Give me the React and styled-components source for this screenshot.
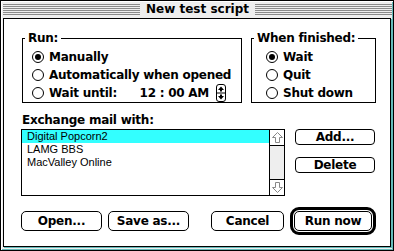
import React from "react";
import styled, { createGlobalStyle } from "styled-components";

const GlobalStyle = createGlobalStyle`
  html, body {
    margin: 0;
    padding: 0;
    background: #fff;
  }
  body {
    width: 394px;
    height: 251px;
    overflow: hidden;
  }
`;

const sys = `"DejaVu Sans", "Liberation Sans", sans-serif`;
const small = `"Liberation Sans", Arial, sans-serif`;

const Window = styled.div`
  box-sizing: border-box;
  width: 394px;
  height: 251px;
  border: 1px solid #000;
  background: #eeeeee;
  box-shadow: inset 1px 1px 0 #ffffff, inset -1px -1px 0 #66bbbb;
  display: flex;
  flex-direction: column;
  padding: 0 2px 3px 2px;
  font-family: ${sys};
  letter-spacing: -0.25px;
  color: #000;
`;

const TitleBar = styled.div`
  height: 17px;
  display: flex;
  align-items: center;
  margin: 0 -1px 0 0;
`;

const Stripes = styled.div`
  flex: 1;
  height: 11px;
  background: repeating-linear-gradient(
    to bottom,
    #8a8a8a 0,
    #8a8a8a 1px,
    transparent 1px,
    transparent 2px
  );
`;

const Title = styled.div`
  padding: 0 6px;
  font-size: 12px;
  font-weight: bold;
  line-height: 17px;
  letter-spacing: 0;
`;

const Content = styled.div`
  flex: 1;
  border: 1px solid #000;
  background: #fff;
  box-shadow: 1px 1px 0 #66bbbb;
  padding: 13px 0 0 17px;
  display: flex;
  flex-direction: column;
`;

const TopRow = styled.div`
  display: flex;
  gap: 9px;
  margin-left: 1px;
`;

const Group = styled.fieldset`
  box-sizing: border-box;
  width: ${(p) => p.$w}px;
  margin: 0;
  padding: 3px 0 0 0;
  border: 1px solid #000;
  min-inline-size: 0;
`;

const Legend = styled.legend`
  margin-left: 2px;
  padding: 0 3px;
  font-size: 12px;
  font-weight: bold;
  line-height: 13px;
`;

const RadioRow = styled.div`
  height: 18px;
  display: flex;
  align-items: center;
  padding-left: ${(p) => p.$indent}px;
  font-size: 12px;
  font-weight: bold;
`;

const Circle = styled.span`
  box-sizing: border-box;
  width: 12px;
  height: 12px;
  border: 1px solid #000;
  border-radius: 50%;
  display: flex;
  align-items: center;
  justify-content: center;
  margin-right: 5px;
  flex: none;

  &::after {
    content: "";
    width: 6px;
    height: 6px;
    border-radius: 50%;
    background: #000;
    display: ${(p) => (p.$on ? "block" : "none")};
  }
`;

const TimeText = styled.span`
  margin-left: auto;
  white-space: pre;
`;

const Spinner = styled.svg`
  margin: 0 15px 0 7px;
  flex: none;
`;

const MiddleRow = styled.div`
  display: flex;
  gap: 10px;
  margin-top: 10px;
`;

const ListColumn = styled.div`
  display: flex;
  flex-direction: column;
`;

const Label = styled.div`
  font-size: 12px;
  font-weight: bold;
  line-height: 14px;
  margin-left: 1px;
  margin-bottom: 2px;
`;

const ListBox = styled.div`
  box-sizing: border-box;
  width: 264px;
  height: 67px;
  border: 1px solid #000;
  display: flex;
`;

const Items = styled.div`
  flex: 1;
  display: flex;
  flex-direction: column;
`;

const Item = styled.div`
  height: 13px;
  line-height: 13px;
  padding-left: 5px;
  font-family: ${small};
  font-size: 11px;
  letter-spacing: 0;
  background: ${(p) => (p.$selected ? "#33ffff" : "transparent")};
`;

const ScrollBar = styled.div`
  box-sizing: border-box;
  width: 15px;
  border-left: 1px solid #000;
  background: #eeeeee;
  display: flex;
  flex-direction: column;
  justify-content: space-between;
`;

const ArrowBox = styled.div`
  height: 15px;
  background: #fff;
  display: flex;
  align-items: center;
  justify-content: center;
  border-${(p) => (p.$up ? "bottom" : "top")}: 1px solid #000;
`;

const SideButtons = styled.div`
  display: flex;
  flex-direction: column;
  gap: 12px;
  padding-top: 16px;
`;

const Button = styled.button`
  box-sizing: border-box;
  width: ${(p) => p.$w}px;
  height: ${(p) => p.$h || 20}px;
  margin-left: ${(p) => p.$gap || 0}px;
  border: 1px solid #000;
  border-radius: ${(p) => (p.$h && p.$h < 18 ? 4 : 5)}px;
  background: #fff;
  padding: 0;
  font-family: ${sys};
  font-size: 12px;
  font-weight: bold;
  letter-spacing: -0.25px;
  color: #000;
  line-height: 1;
`;

const BottomRow = styled.div`
  display: flex;
  align-items: center;
  margin-top: 11px;
`;

const DefaultRing = styled.div`
  border: 3px solid #000;
  border-radius: 9px;
  padding: 1px;
  margin-left: 6px;
  display: flex;
`;

const UpArrow = () => (
  <svg width="11" height="11" viewBox="0 0 11 11">
    <path
      d="M5.5 0.5 L10.5 5.5 L7.5 5.5 L7.5 10.5 L3.5 10.5 L3.5 5.5 L0.5 5.5 Z"
      fill="none"
      stroke="#888"
      strokeWidth="1"
    />
  </svg>
);

const DownArrow = () => (
  <svg width="11" height="11" viewBox="0 0 11 11">
    <path
      d="M5.5 10.5 L10.5 5.5 L7.5 5.5 L7.5 0.5 L3.5 0.5 L3.5 5.5 L0.5 5.5 Z"
      fill="none"
      stroke="#888"
      strokeWidth="1"
    />
  </svg>
);

export default function App() {
  return (
    <>
      <GlobalStyle />
      <Window>
        <TitleBar>
          <Stripes />
          <Title>New test script</Title>
          <Stripes />
        </TitleBar>
        <Content>
          <TopRow>
            <Group $w={220}>
              <Legend>Run:</Legend>
              <RadioRow $indent={9}>
                <Circle $on />
                Manually
              </RadioRow>
              <RadioRow $indent={9}>
                <Circle />
                Automatically when opened
              </RadioRow>
              <RadioRow $indent={9}>
                <Circle />
                Wait until:
                <TimeText>12 : 00 AM</TimeText>
                <Spinner width="10" height="18" viewBox="0 0 10 18">
                  <rect x="0.5" y="0.5" width="9" height="17" rx="2.5" fill="#fff" stroke="#000" />
                  <line x1="1" y1="9" x2="9" y2="9" stroke="#000" />
                  <path d="M5 2.5 L8 6 L6 6 L6 7.5 L4 7.5 L4 6 L2 6 Z" fill="#000" />
                  <path d="M5 15.5 L8 12 L6 12 L6 10.5 L4 10.5 L4 12 L2 12 Z" fill="#000" />
                </Spinner>
              </RadioRow>
            </Group>
            <Group $w={125}>
              <Legend>When finished:</Legend>
              <RadioRow $indent={14}>
                <Circle $on />
                Wait
              </RadioRow>
              <RadioRow $indent={14}>
                <Circle />
                Quit
              </RadioRow>
              <RadioRow $indent={14}>
                <Circle />
                Shut down
              </RadioRow>
            </Group>
          </TopRow>
          <MiddleRow>
            <ListColumn>
              <Label>Exchange mail with:</Label>
              <ListBox>
                <Items>
                  <Item $selected>Digital Popcorn2</Item>
                  <Item>LAMG BBS</Item>
                  <Item>MacValley Online</Item>
                </Items>
                <ScrollBar>
                  <ArrowBox $up>
                    <UpArrow />
                  </ArrowBox>
                  <ArrowBox>
                    <DownArrow />
                  </ArrowBox>
                </ScrollBar>
              </ListBox>
            </ListColumn>
            <SideButtons>
              <Button $w={80} $h={16}>Add...</Button>
              <Button $w={80} $h={16}>Delete</Button>
            </SideButtons>
          </MiddleRow>
          <BottomRow>
            <Button $w={81}>Open...</Button>
            <Button $w={81} $gap={6}>Save as...</Button>
            <Button $w={73} $gap={22}>Cancel</Button>
            <DefaultRing>
              <Button $w={78}>Run now</Button>
            </DefaultRing>
          </BottomRow>
        </Content>
      </Window>
    </>
  );
}
